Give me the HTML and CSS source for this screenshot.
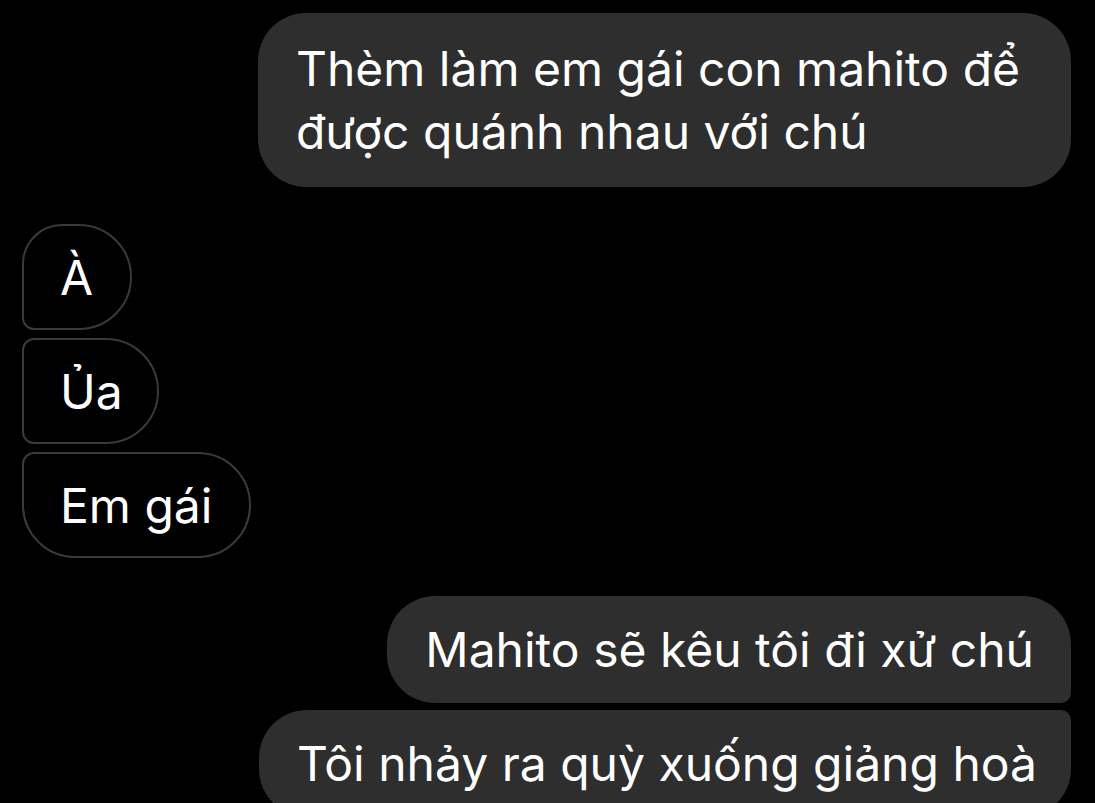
FILE: index.html
```html
<!DOCTYPE html>
<html lang="vi">
<head>
<meta charset="UTF-8">
<meta name="viewport" content="width=device-width, initial-scale=1.0">
<title>Chat</title>
<link rel="stylesheet" href="styles.css">
</head>
<body>

<div class="thread">
    <div class="msg sent single">Thèm làm em gái con mahito để<br>được quánh nhau với chú</div>

    <!-- received group -->
    <div class="group received-group">
        <div class="msg received first">À</div>
        <div class="msg received middle">Ủa</div>
        <div class="msg received last">Em gái</div>
    </div>

    <!-- sent group -->
    <div class="group sent-group">
        <div class="msg sent first">Mahito sẽ kêu tôi đi xử chú</div>
        <div class="msg sent last">Tôi nhảy ra quỳ xuống giảng hoà</div>
    </div>
</div>

</body>
</html>
```

FILE: styles.css
```css
body {
    margin: 0;
    padding: 0;
    background-color: #000;
    font-family: Inter, "Noto Sans", sans-serif;
    color: #fff;
    overflow: hidden;
}
.thread {
    display: flex;
    flex-direction: column;
    padding: 13px 24px 0 22px;
}
.group {
    display: flex;
    flex-direction: column;
}
.received-group {
    align-items: flex-start;
    gap: 8px;
    margin-top: 37px;
}
.sent-group {
    align-items: flex-end;
    gap: 7px;
    margin-top: 38px;
}
.msg {
    font-size: 48px;
    line-height: 63px;
    padding: 22px 37px 22px 38px;
    box-sizing: border-box;
    white-space: nowrap;
}
.sent {
    background-color: #2e2e2e;
    border-radius: 48px;
}
.sent.single {
    align-self: flex-end;
    padding: 24px 51px 24px 38px;
}
.sent.first {
    border-bottom-right-radius: 10px;
}
.sent.last {
    border-top-right-radius: 10px;
    padding-right: 34px;
}
.received {
    border: 2px solid #3a3a3a;
    border-radius: 53px;
    padding: 20px 37px 19px 36px;
}
.received.first {
    border-bottom-left-radius: 12px;
    border-top-left-radius: 40px;
}
.received.middle {
    border-top-left-radius: 12px;
    border-bottom-left-radius: 12px;
    padding-right: 34px;
}
.received.last {
    border-top-left-radius: 12px;
    border-bottom-left-radius: 53px;
}
```
